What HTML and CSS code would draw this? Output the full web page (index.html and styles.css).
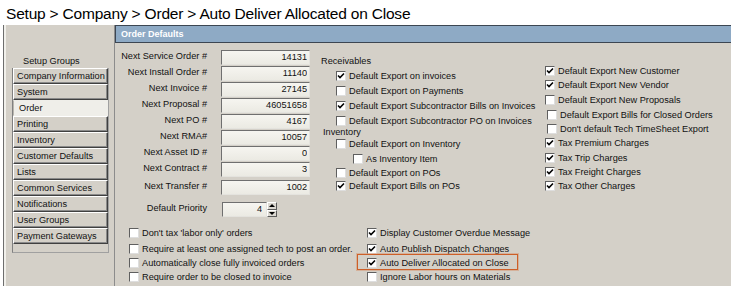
FILE: index.html
```html
<!DOCTYPE html>
<html lang="en">
<head>
    <meta charset="UTF-8">
    <title>Order Defaults</title>
    <link rel="stylesheet" href="styles.css">
</head>
<body>
    <h1 class="crumb">Setup &gt; Company &gt; Order &gt; Auto Deliver Allocated on Close</h1>

    <div class="window">
        <aside class="sidebar">
            <div class="group-title">Setup Groups</div>
            <ul class="groups">
                <li>Company Information</li>
                <li>System</li>
                <li class="active">Order</li>
                <li>Printing</li>
                <li>Inventory</li>
                <li>Customer Defaults</li>
                <li>Lists</li>
                <li>Common Services</li>
                <li>Notifications</li>
                <li>User Groups</li>
                <li>Payment Gateways</li>
            </ul>
        </aside>

        <section class="panel">
            <div class="panel-head">Order Defaults</div>
            <div class="panel-body">
                <div class="upper">
                    <div class="fields">
                        <div class="field"><label>Next Service Order #</label><input value="14131" readonly></div>
                        <div class="field"><label>Next Install Order #</label><input value="11140" readonly></div>
                        <div class="field"><label>Next Invoice #</label><input value="27145" readonly></div>
                        <div class="field"><label>Next Proposal #</label><input value="46051658" readonly></div>
                        <div class="field"><label>Next PO #</label><input value="4167" readonly></div>
                        <div class="field"><label>Next RMA#</label><input value="10057" readonly></div>
                        <div class="field"><label>Next Asset ID #</label><input value="0" readonly></div>
                        <div class="field sp"><label>Next Contract #</label><input value="3" readonly></div>
                        <div class="field sp2"><label>Next Transfer #</label><input value="1002" readonly></div>
                        <div class="field priority">
                            <label>Default Priority</label>
                            <div class="spin">
                                <input value="4" readonly>
                                <span class="spin-btns"><span class="up"></span><span class="down"></span></span>
                            </div>
                        </div>
                    </div>

                    <div class="col-mid">
                        <div class="heading">Receivables</div>
                        <div class="cb in h15"><span class="box"><svg viewBox="0 0 8 8"><path d="M1 3.5 3 5.5 7 1.5"/></svg></span>Default Export on invoices</div>
                        <div class="cb in h15"><span class="box"></span>Default Export on Payments</div>
                        <div class="cb in h15"><span class="box"><svg viewBox="0 0 8 8"><path d="M1 3.5 3 5.5 7 1.5"/></svg></span>Default Export Subcontractor Bills on Invoices</div>
                        <div class="cb in h15"><span class="box"></span>Default Export Subcontractor PO on Invoices</div>
                        <div class="heading small">Inventory</div>
                        <div class="cb in h15"><span class="box"></span>Default Export on Inventory</div>
                        <div class="cb sub h15"><span class="box"></span>As Inventory Item</div>
                        <div class="cb in h13"><span class="box"></span>Default Export on POs</div>
                        <div class="cb in"><span class="box"><svg viewBox="0 0 8 8"><path d="M1 3.5 3 5.5 7 1.5"/></svg></span>Default Export Bills on POs</div>
                    </div>

                    <div class="col-right">
                        <div class="cb"><span class="box"><svg viewBox="0 0 8 8"><path d="M1 3.5 3 5.5 7 1.5"/></svg></span>Default Export New Customer</div>
                        <div class="cb"><span class="box"><svg viewBox="0 0 8 8"><path d="M1 3.5 3 5.5 7 1.5"/></svg></span>Default Export New Vendor</div>
                        <div class="cb h15"><span class="box"></span>Default Export New Proposals</div>
                        <div class="cb h15 nudge"><span class="box"></span>Default Export Bills for Closed Orders</div>
                        <div class="cb nudge"><span class="box"></span>Don't default Tech TimeSheet Export</div>
                        <div class="cb"><span class="box"><svg viewBox="0 0 8 8"><path d="M1 3.5 3 5.5 7 1.5"/></svg></span>Tax Premium Charges</div>
                        <div class="cb h15"><span class="box"><svg viewBox="0 0 8 8"><path d="M1 3.5 3 5.5 7 1.5"/></svg></span>Tax Trip Charges</div>
                        <div class="cb"><span class="box"><svg viewBox="0 0 8 8"><path d="M1 3.5 3 5.5 7 1.5"/></svg></span>Tax Freight Charges</div>
                        <div class="cb"><span class="box"><svg viewBox="0 0 8 8"><path d="M1 3.5 3 5.5 7 1.5"/></svg></span>Tax Other Charges</div>
                    </div>
                </div>

                <div class="lower">
                    <div class="cb"><span class="box"></span>Don't tax 'labor only' orders</div>
                    <div class="cb"><span class="box"><svg viewBox="0 0 8 8"><path d="M1 3.5 3 5.5 7 1.5"/></svg></span>Display Customer Overdue Message</div>
                    <div class="cb"><span class="box"></span>Require at least one assigned tech to post an order.</div>
                    <div class="cb"><span class="box"><svg viewBox="0 0 8 8"><path d="M1 3.5 3 5.5 7 1.5"/></svg></span>Auto Publish Dispatch Changes</div>
                    <div class="cb"><span class="box"></span>Automatically close fully invoiced orders</div>
                    <div class="cb hl"><span class="box"><svg viewBox="0 0 8 8"><path d="M1 3.5 3 5.5 7 1.5"/></svg></span>Auto Deliver Allocated on Close</div>
                    <div class="cb"><span class="box"></span>Require order to be closed to invoice</div>
                    <div class="cb"><span class="box"></span>Ignore Labor hours on Materials</div>
                </div>
            </div>
        </section>
    </div>
</body>
</html>
```

FILE: styles.css
```css
* {
    margin: 0;
    padding: 0;
    box-sizing: border-box;
}

body {
    background-color: #fff;
    color: #111;
    font-family: "Liberation Sans", Arial, sans-serif;
    font-size: 9.2px;
    overflow: hidden;
}

.crumb {
    height: 25px;
    padding: 5px 0 0 6px;
    font-size: 15.5px;
    font-weight: normal;
    line-height: 18px;
    letter-spacing: -0.2px;
    color: #000;
    white-space: nowrap;
}

.window {
    display: flex;
    height: 261px;
    margin-left: 3px;
    background-color: #d4d0c8;
    border-left: 1px solid #6d6d6d;
    box-shadow: inset 2px 0 0 #f1f0eb;
}

/* left column */

.sidebar {
    width: 111px;
    flex-shrink: 0;
    padding-top: 30px;
    border-right: 1px solid #8c8c8c;
}

.group-title {
    height: 13px;
    padding-left: 19px;
    line-height: 13px;
}

.groups {
    list-style: none;
    width: 97px;
    margin-left: 8px;
    padding-bottom: 8px;
    border-left: 1px solid #808080;
    border-bottom: 1px solid #a0a0a0;
    border-right: 1px solid #a0a0a0;
}

.groups li {
    height: 16px;
    padding-left: 3px;
    line-height: 14px;
    white-space: nowrap;
    border-top: 1px solid #fff;
    border-left: 1px solid #fff;
    border-right: 1px solid #404040;
    border-bottom: 1px solid #404040;
    box-shadow: inset -1px -1px 0 #8a8a8a;
}

.groups li.active {
    padding-left: 5px;
    background-color: #efeee9;
    border-color: #efeee9;
    border-left-color: #b9b6ae;
    box-shadow: none;
}

/* right panel */

.panel {
    flex: 1;
    display: flex;
    flex-direction: column;
}

.panel-head {
    height: 18px;
    padding-left: 5px;
    background-color: #8eaac5;
    border-top: 1px solid #3c4652;
    border-bottom: 1px solid #3c4652;
    border-left: 1px solid #3c4652;
    color: #fff;
    font-size: 9px;
    font-weight: bold;
    line-height: 16px;
}

.upper {
    display: flex;
    align-items: flex-start;
}

.fields {
    margin-top: 7px;
}

.field {
    display: flex;
    height: 15px;
    margin-bottom: 1px;
}

.field.sp {
    margin-top: 1px;
}

.field.sp2 {
    margin-top: 3px;
}

.field.priority {
    margin-top: 7px;
}

.field label {
    width: 92px;
    margin-right: 14px;
    text-align: right;
    line-height: 13px;
    white-space: nowrap;
}

.field input {
    width: 89px;
    height: 15px;
    padding: 0 2px 2px 0;
    font: inherit;
    color: inherit;
    text-align: right;
    background: linear-gradient(#f6f5f0, #ebeae3);
    border: 1px solid;
    border-color: #6f6f6f #e4e3de #e4e3de #6f6f6f;
    outline: none;
}

.spin {
    display: flex;
    margin-left: 1px;
}

.spin input {
    width: 45px;
    padding-right: 4px;
}

.spin-btns {
    display: flex;
    flex-direction: column;
    width: 10px;
    height: 15px;
}

.spin-btns span {
    display: flex;
    align-items: center;
    justify-content: center;
    height: 7.5px;
    background-color: #dcd9d2;
    border: 1px solid;
    border-color: #fff #5a5a5a #5a5a5a #fff;
}

.spin-btns .up::after,
.spin-btns .down::after {
    content: "";
    border-left: 3px solid transparent;
    border-right: 3px solid transparent;
}

.spin-btns .up::after {
    border-bottom: 3px solid #000;
}

.spin-btns .down::after {
    border-top: 3px solid #000;
}

.col-mid {
    width: 223px;
    margin: 11px 0 0 11px;
}

.heading {
    height: 14px;
    line-height: 15px;
}

.heading.small {
    height: 8px;
    padding-left: 2px;
    line-height: 8px;
}

.col-right {
    margin-top: 21px;
    padding-left: 1px;
}

/* checkboxes */

.cb {
    display: flex;
    align-items: center;
    gap: 3px;
    height: 14px;
    white-space: nowrap;
}

.cb.h15 {
    height: 15px;
}

.cb.h13 {
    height: 13px;
}

.cb.in {
    padding-left: 15px;
}

.cb.sub {
    padding-left: 32px;
}

.cb.nudge {
    padding-left: 2px;
}

.box {
    display: inline-block;
    flex-shrink: 0;
    width: 10px;
    height: 10px;
    background-color: #fff;
    border: 1px solid;
    border-color: #5f5f5f #dedede #dedede #5f5f5f;
}

.box svg {
    display: block;
    width: 8px;
    height: 8px;
    fill: none;
    stroke: #000;
    stroke-width: 1.6;
}

.lower {
    display: grid;
    grid-template-columns: 238px auto;
    grid-template-rows: 16px 14px 14px 14px;
    margin-top: 8px;
    padding-left: 14px;
}

.lower .cb {
    justify-self: start;
}

.cb.hl {
    margin: -2px 0 -1px -10px;
    padding: 1px 8px 0 9px;
    height: 16px;
    border: 1px solid #cd5f28;
    box-shadow: 0 0 0 1px rgba(214, 120, 70, 0.35);
}
```
